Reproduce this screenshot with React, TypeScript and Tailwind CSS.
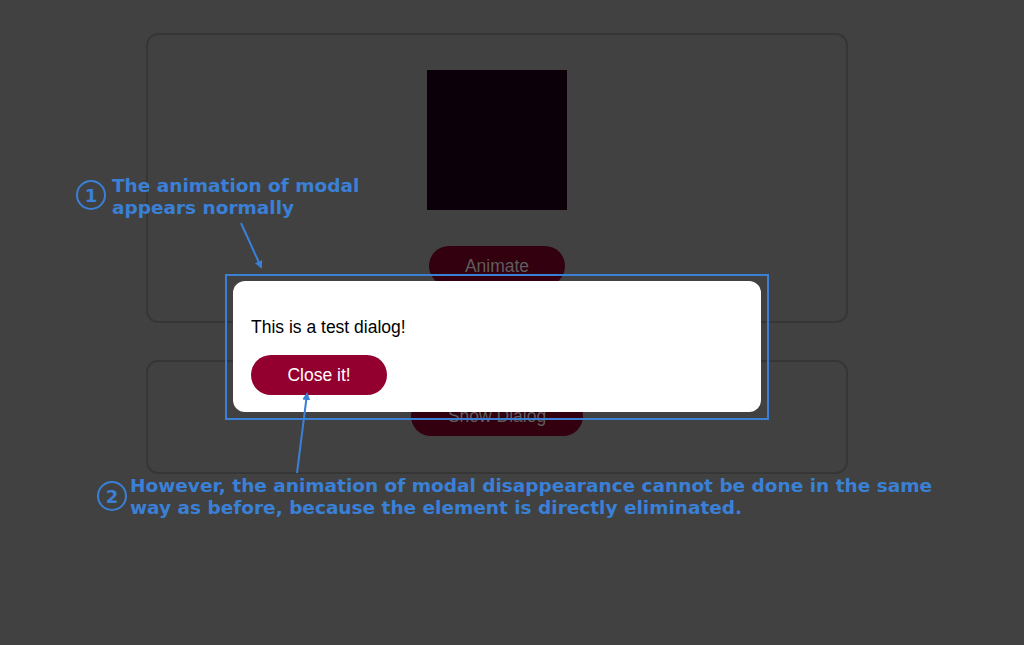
import React from "react";

const annoFont = { fontFamily: '"DejaVu Sans", sans-serif' };

function Num({ n }: { n: string }) {
  return (
    <div className="w-[30px] h-[30px] shrink-0 rounded-full border-2 border-[#3a80d6] flex items-center justify-center text-[#3a80d6] font-bold text-[18px]" style={annoFont}>
      {n}
    </div>
  );
}

export default function App() {
  return (
    <div className="relative w-[1024px] h-[645px] overflow-hidden bg-[#414141]" style={{ fontFamily: '"Liberation Sans", Arial, sans-serif' }}>
      <div className="flex flex-col gap-[37px] pt-[33px] pl-[146px]">
        <div className="w-[702px] h-[290px] rounded-[12px] border-2 border-[#363636] flex flex-col items-center pt-[35px] gap-[36px]">
          <div className="w-[140px] h-[140px] bg-[#0b0009]" />
          <div className="w-[136px] h-[40px] rounded-full bg-[#32000f] flex items-center justify-center text-[17.5px] text-[#5d5d5d]">Animate</div>
        </div>
        <div className="w-[702px] h-[114px] rounded-[12px] border-2 border-[#363636] flex flex-col items-center pt-[34px]">
          <div className="w-[172px] h-[40px] rounded-full bg-[#32000f] flex items-center justify-center text-[17.5px] text-[#5d5d5d]">Show Dialog</div>
        </div>
      </div>

      {/* dialog */}
      <div className="absolute left-[233px] top-[281px] w-[528px] h-[131px] rounded-[12px] bg-white px-[18px] pt-[36px] flex flex-col gap-[18px]">
        <div className="text-[17.5px] leading-[20px] text-black">This is a test dialog!</div>
        <div className="w-[136px] h-[40px] rounded-full bg-[#930030] flex items-center justify-center text-[17.5px] text-white">Close it!</div>
      </div>

      {/* annotation box */}
      <div className="absolute left-[225px] top-[274px] w-[544px] h-[146px] border-2 border-[#3a80d6]" />

      {/* arrows */}
      <svg className="absolute left-0 top-0 pointer-events-none" width="1024" height="645">
        <defs>
          <marker id="ah" markerWidth="8" markerHeight="8" refX="6" refY="4" orient="auto" markerUnits="userSpaceOnUse">
            <path d="M0,0 L8,4 L0,8 Z" fill="#3a80d6" />
          </marker>
        </defs>
        <line x1="241" y1="223" x2="261" y2="267" stroke="#3a80d6" strokeWidth="2" markerEnd="url(#ah)" />
        <line x1="297" y1="473" x2="307" y2="394" stroke="#3a80d6" strokeWidth="2" markerEnd="url(#ah)" />
      </svg>

      <div className="absolute left-[76px] top-[175px] flex items-start gap-[6px]">
        <div className="pt-[5px]"><Num n="1" /></div>
        <div className="text-[#3a80d6] font-bold text-[18.5px] leading-[22px] whitespace-nowrap" style={annoFont}>
          The animation of modal<br />appears normally
        </div>
      </div>
      <div className="absolute left-[97px] top-[475px] flex items-start gap-[3px]">
        <div className="pt-[6px]"><Num n="2" /></div>
        <div className="text-[#3a80d6] font-bold text-[18.5px] leading-[22px] whitespace-nowrap" style={annoFont}>
          However, the animation of modal disappearance cannot be done in the same<br />way as before, because the element is directly eliminated.
        </div>
      </div>
    </div>
  );
}
